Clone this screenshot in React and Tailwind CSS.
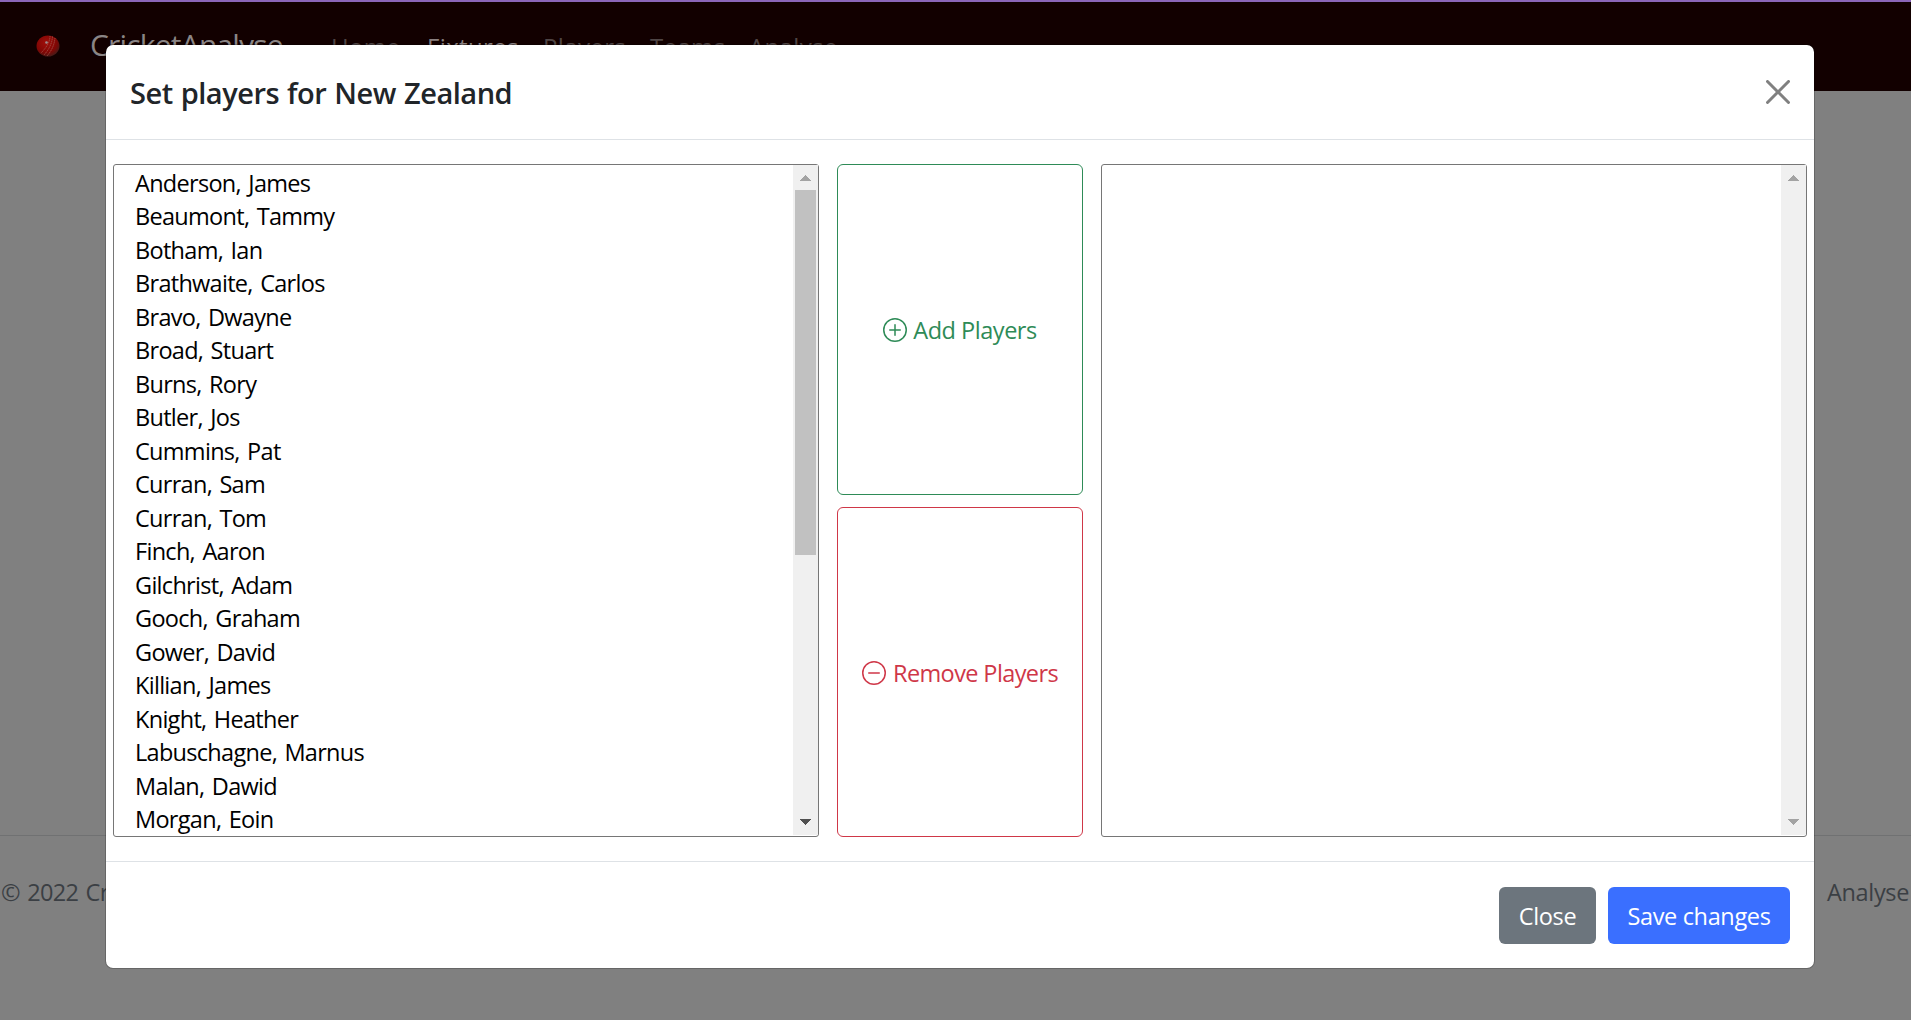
import React from "react";

const leftPlayers = [
  "Anderson, James",
  "Beaumont, Tammy",
  "Botham, Ian",
  "Brathwaite, Carlos",
  "Bravo, Dwayne",
  "Broad, Stuart",
  "Burns, Rory",
  "Butler, Jos",
  "Cummins, Pat",
  "Curran, Sam",
  "Curran, Tom",
  "Finch, Aaron",
  "Gilchrist, Adam",
  "Gooch, Graham",
  "Gower, David",
  "Killian, James",
  "Knight, Heather",
  "Labuschagne, Marnus",
  "Malan, Dawid",
  "Morgan, Eoin",
];

function Arrow({ down, color }) {
  return (
    <svg width="11" height="6" viewBox="0 0 11 6" className={color} fill="currentColor" shapeRendering="crispEdges">
      <path d={down ? "M0 0H11L5.5 6Z" : "M0 6H11L5.5 0Z"} />
    </svg>
  );
}

function ListBox({ items, scrollable }) {
  return (
    <div className="flex h-[673px] w-[706px] shrink-0 rounded-[3px] border border-[#767676] bg-white">
      <ul className="min-w-0 flex-1 overflow-hidden pl-[21px] text-black">
        {items.map((name) => (
          <li key={name} className="leading-[36px] whitespace-nowrap odd:h-[33px] even:h-[34px]">
            {name}
          </li>
        ))}
      </ul>
      <div className="flex h-[670px] w-[25px] shrink-0 flex-col items-center justify-between bg-[#f0f0f0] pt-[10px] pb-[10px]">
        <div className="flex flex-col items-center gap-[9px]">
          <Arrow color="text-[#a3a3a3]" />
          {scrollable && <div className="h-[365px] w-[21px] bg-[#c1c1c1]" />}
        </div>
        <Arrow down color={scrollable ? "text-[#505050]" : "text-[#a3a3a3]"} />
      </div>
    </div>
  );
}

function CircleIcon({ plus }) {
  return (
    <svg width="24" height="24" viewBox="0 0 16 16" fill="currentColor" className="shrink-0">
      <path d="M8 15A7 7 0 1 1 8 1a7 7 0 0 1 0 14m0 1A8 8 0 1 0 8 0a8 8 0 0 0 0 16" />
      {plus ? (
        <path d="M8 4a.5.5 0 0 1 .5.5v3h3a.5.5 0 0 1 0 1h-3v3a.5.5 0 0 1-1 0v-3h-3a.5.5 0 0 1 0-1h3v-3A.5.5 0 0 1 8 4" />
      ) : (
        <path d="M4 8a.5.5 0 0 1 .5-.5h7a.5.5 0 0 1 0 1h-7A.5.5 0 0 1 4 8" />
      )}
    </svg>
  );
}

function CricketBall() {
  return (
    <svg width="24" height="22" viewBox="0 0 24 22" className="shrink-0">
      <defs>
        <radialGradient id="leather" cx="0.42" cy="0.35" r="0.65">
          <stop offset="0" stopColor="#a0100c" />
          <stop offset="0.7" stopColor="#800604" />
          <stop offset="1" stopColor="#4a1a17" />
        </radialGradient>
      </defs>
      <ellipse cx="12" cy="11" rx="11.5" ry="10.6" fill="url(#leather)" />
      <g fill="none" stroke="#a3554c" strokeWidth="0.9" strokeDasharray="1.4 0.7">
        <path d="M14 1Q14 9 5 18" />
        <path d="M16.500 1.500Q16 11 8 20" />
        <path d="M19 3Q18 13 11 21" />
      </g>
      <circle cx="10.500" cy="7.500" r="1.300" fill="#9c8f92" />
    </svg>
  );
}

export default function App() {
  return (
    <div className="relative flex h-[1020px] w-[1911px] flex-col overflow-hidden bg-[#808080] font-['Open_Sans','Noto_Sans',sans-serif] text-[23.5px] font-[370] tracking-[-0.03em] [word-spacing:2px]">
      <header className="flex h-[91px] shrink-0 items-center border-t-2 border-[#8b66b8] bg-[#120000] pb-px pl-9 whitespace-nowrap text-[#4f4545]">
        <CricketBall />
        <span className="ml-[30px] w-[241px] pb-[3px] text-[30px] leading-[40px] tracking-[-0.027em] text-[#8a8585]">CricketAnalyse</span>
        <nav className="flex pt-px text-[24px] tracking-[0.015em]">
          <span className="w-[96px]">Home</span>
          <span className="w-[116px] text-[#8a8080]">Fixtures</span>
          <span className="w-[107px]">Players</span>
          <span className="w-[99px]">Teams</span>
          <span>Analyse</span>
        </nav>
      </header>
      <main className="flex-1" />
      <footer className="flex h-[185px] shrink-0 items-start justify-between border-t border-[#707172] pt-[38px] pr-[2px] pl-px leading-[36px] text-[#3b3f44]">
        <span>© 2022 CricketAnalyse</span>
        <span className="tracking-[-0.015em]">Analyse</span>
      </footer>

      <section className="absolute top-[44px] left-[105px] flex h-[925px] w-[1710px] flex-col rounded-[8px] border border-black/20 bg-white bg-clip-padding text-[#212529]">
        <div className="flex h-[95px] shrink-0 items-center justify-between border-b border-[#dee2e6] pr-[24px] pl-[24px]">
          <h5 className="pt-[2px] text-[29px] leading-[44px] font-[570] tracking-[-0.017em] [word-spacing:1px]">Set players for New Zealand</h5>
          <svg width="24" height="24" viewBox="0 0 16 16" fill="#808080">
            <path d="M.293.293a1 1 0 0 1 1.414 0L8 6.586 14.293.293a1 1 0 1 1 1.414 1.414L9.414 8l6.293 6.293a1 1 0 0 1-1.414 1.414L8 9.414l-6.293 6.293a1 1 0 0 1-1.414-1.414L6.586 8 .293 1.707a1 1 0 0 1 0-1.414z" />
          </svg>
        </div>
        <div className="flex h-[721px] shrink-0 justify-between px-[7px] pt-[24px]">
          <ListBox items={leftPlayers} scrollable />
          <div className="flex h-[673px] w-[246px] flex-col gap-[12px] tracking-[-0.02em]">
            <button className="flex h-[331px] items-center justify-center gap-[6px] rounded-[6px] border border-[#2e8b57] pt-px text-[#2e8b57]">
              <CircleIcon plus />
              <span className="pt-[2px]">Add Players</span>
            </button>
            <button className="flex h-[330px] items-center justify-center gap-[7px] rounded-[6px] border border-[#cf3748] pt-[2px] tracking-[-0.026em] text-[#cf3748]">
              <CircleIcon />
              <span className="pt-[2px]">Remove Players</span>
            </button>
          </div>
          <ListBox items={[]} />
        </div>
        <div className="flex flex-1 items-center justify-end gap-[12px] border-t border-[#dee2e6] pr-[24px] tracking-[-0.015em] text-white">
          <button className="h-[57px] w-[97px] rounded-[6px] bg-[#6c757d] pt-[3px]">Close</button>
          <button className="h-[57px] w-[182px] rounded-[6px] bg-[#3a6fff] pt-[3px]">Save changes</button>
        </div>
      </section>
    </div>
  );
}
